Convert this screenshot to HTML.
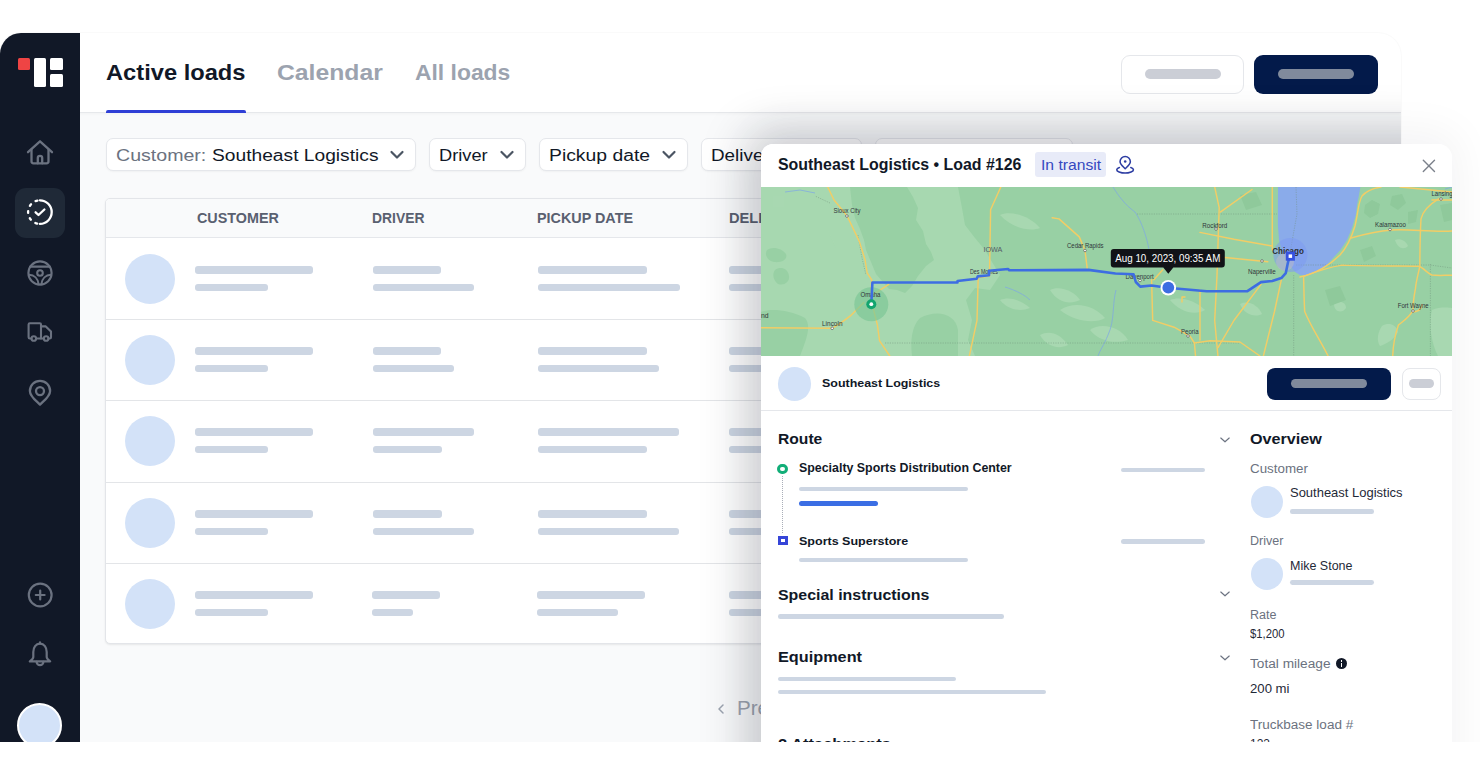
<!DOCTYPE html>
<html><head><meta charset="utf-8">
<style>
html,body{margin:0;padding:0}
body{width:1480px;height:775px;background:#fff;position:relative;overflow:hidden;font-family:"Liberation Sans",sans-serif}
.t{position:absolute;white-space:nowrap;line-height:1}
.b{position:absolute}
.ic{position:absolute;display:block}
.box{position:absolute;background:#fff;border:1px solid #e5e7eb;border-radius:7px;box-sizing:border-box;box-shadow:0 1px 2px rgba(0,0,0,0.04)}
</style></head>
<body>
<div id="app" style="position:absolute;left:0;top:32.5px;width:1401px;height:709.5px;border-radius:21px 23px 0 0;overflow:hidden;background:#f9fafb;box-shadow:0 0 0 1px rgba(0,0,0,0.018)">
 <div style="position:absolute;left:0;top:0;width:1401px;height:80.5px;background:#fff;border-bottom:1.2px solid #e6e8eb;box-sizing:border-box;box-shadow:0 1px 3px rgba(0,0,0,0.035)"></div>
</div>
<div id="shclip" style="position:absolute;left:0;top:32.5px;width:1401px;height:709.5px;overflow:hidden;z-index:5;pointer-events:none">
 <div style="position:absolute;left:760.7px;top:111px;width:691.5px;height:700px;border-radius:12px 14px 0 0;box-shadow:-5px -3px 46px 12px rgba(17,24,39,0.18)"></div>
</div>
<div style="position:absolute;left:0;top:32.5px;width:80px;height:709.5px;background:#111827;border-top-left-radius:21px"></div>
<div class="b" style="left:17.5px;top:57.5px;width:12.5px;height:12.5px;border-radius:1.5px;background:#ef4444"></div>
<div class="b" style="left:33.8px;top:57.5px;width:12.4px;height:29.4px;border-radius:1.5px;background:#fff"></div>
<div class="b" style="left:50.3px;top:57.5px;width:12.7px;height:12.6px;border-radius:1.5px;background:#fff"></div>
<div class="b" style="left:50.3px;top:74.3px;width:12.7px;height:12.6px;border-radius:1.5px;background:#fff"></div>

<svg class="ic" style="left:26px;top:139px" width="28" height="27" viewBox="0 0 28 27" fill="none" stroke="#6b7280" stroke-width="2.3" stroke-linecap="round" stroke-linejoin="round">
 <path d="M2 13.2 L14 2.3 L26 13.2"/><path d="M5.5 10.6 V22.3 Q5.5 24.3 7.5 24.3 H20.5 Q22.5 24.3 22.5 22.3 V10.6"/><path d="M11.8 24.3 V19 Q11.8 16.9 14 16.9 Q16.2 16.9 16.2 19 V24.3"/>
</svg>
<div class="b" style="left:15px;top:187.5px;width:50px;height:50px;border-radius:11px;background:#1f2937"></div>
<svg class="ic" style="left:25px;top:197px" width="30" height="30" viewBox="0 0 30 30" fill="none" stroke="#fff" stroke-width="2.3" stroke-linecap="round" stroke-linejoin="round">
 <path d="M14.9 3.3 A11.8 11.8 0 0 1 14.9 26.9"/>
 <path d="M14.9 26.9 A11.8 11.8 0 0 1 14.9 3.3" stroke-dasharray="1.9 5.514" stroke-dashoffset="4.657"/>
 <path d="M10.6 15.3 L13.5 18 L19.4 12.5"/>
</svg>
<svg class="ic" style="left:25px;top:257.5px" width="30" height="30" viewBox="0 0 30 30" fill="none" stroke="#6b7280" stroke-width="2.1" stroke-linecap="round" stroke-linejoin="round">
 <circle cx="15" cy="15" r="11.6"/><circle cx="15" cy="15" r="2.8"/>
 <path d="M5.2 8.6 H24.8"/>
 <path d="M4.2 16.8 C9 17 13 20.5 13.6 26.3"/><path d="M25.8 16.8 C21 17 17 20.5 16.4 26.3"/>
</svg>
<svg class="ic" style="left:25px;top:317px" width="30" height="30" viewBox="0 0 30 30" fill="none" stroke="#6b7280" stroke-width="2.1" stroke-linecap="round" stroke-linejoin="round">
 <path d="M6.4 21.5 H4.8 Q3.6 21.5 3.6 20.3 V7.4 Q3.6 6.2 4.8 6.2 H14.8 Q16 6.2 16 7.4 V21.5"/>
 <path d="M16 9.4 H20.8 L26 14.6 V20.3 Q26 21.5 24.8 21.5 H23.5"/><path d="M11.2 21.5 H18.5"/>
 <circle cx="8.8" cy="21.5" r="2.3"/><circle cx="21.1" cy="21.5" r="2.3"/>
</svg>
<svg class="ic" style="left:25px;top:378px" width="30" height="30" viewBox="0 0 30 30" fill="none" stroke="#6b7280" stroke-width="2.3" stroke-linecap="round" stroke-linejoin="round">
 <path d="M15 26.6 C11.5 23 4.9 18.5 4.9 12.9 A10.1 10.1 0 0 1 25.1 12.9 C25.1 18.5 18.5 23 15 26.6 Z"/>
 <circle cx="15" cy="13.1" r="4"/>
</svg>
<svg class="ic" style="left:25px;top:580px" width="30" height="30" viewBox="0 0 30 30" fill="none" stroke="#6b7280" stroke-width="2.2" stroke-linecap="round" stroke-linejoin="round">
 <circle cx="15.2" cy="15" r="11.4"/><path d="M15.2 10.6 V19.4 M10.8 15 H19.6"/>
</svg>
<svg class="ic" style="left:25px;top:640px" width="30" height="30" viewBox="0 0 30 30" fill="none" stroke="#6b7280" stroke-width="2.2" stroke-linecap="round" stroke-linejoin="round">
 <path d="M15 3.6 C10.8 3.6 8.3 7.5 8.3 12 V17 C8.3 18.8 6.8 20 4.8 21.3 H25.2 C23.2 20 21.7 18.8 21.7 17 V12 C21.7 7.5 19.2 3.6 15 3.6 Z"/>
 <path d="M11.6 21.8 A3.4 3.4 0 0 0 18.4 21.8"/><path d="M15 2.4 V3.6"/>
</svg>

<div class="b" style="left:17px;top:702.5px;width:45px;height:45px;border-radius:50%;background:#d3e2f8;box-sizing:border-box;border:2.5px solid #fff"></div>
<div class="b" style="left:0;top:742px;width:1480px;height:33px;background:#fff"></div>

<div id="t_active" class="t" style="left:105.70px;top:62.18px;font-size:21.85px;font-weight:700;color:#111827;letter-spacing:0.000px;transform:scaleX(1.0840);transform-origin:0 0">Active loads</div><div id="t_cal" class="t" style="left:276.80px;top:61.70px;font-size:21.85px;font-weight:700;color:#9ca3af;letter-spacing:0.000px;transform:scaleX(1.1317);transform-origin:0 0">Calendar</div><div id="t_all" class="t" style="left:415.00px;top:62.18px;font-size:21.85px;font-weight:700;color:#9ca3af;letter-spacing:0.000px;transform:scaleX(1.0467);transform-origin:0 0">All loads</div>
<div class="b" style="left:105.5px;top:109.7px;width:140.7px;height:3px;border-radius:2px 2px 0 0;background:#2f3fd6"></div>

<div class="b" style="left:1121px;top:55px;width:123px;height:38.5px;border-radius:9px;background:#fff;border:1px solid #e5e7eb;box-sizing:border-box"></div>
<div class="b" style="left:1145.0px;top:69.3px;width:75.5px;height:9.9px;border-radius:5.0px;background:#cbced6"></div>
<div class="b" style="left:1254px;top:55px;width:123.6px;height:38.5px;border-radius:9px;background:#031a4a"></div>
<div class="b" style="left:1278.0px;top:69.3px;width:76.0px;height:9.9px;border-radius:5.0px;background:#808a9c"></div>

<div class="box" style="left:105.6px;top:137.8px;width:310.6px;height:33.6px"></div>
<div class="box" style="left:428.5px;top:137.8px;width:97.3px;height:33.6px"></div>
<div class="box" style="left:538.6px;top:137.8px;width:149.9px;height:33.6px"></div>
<div class="box" style="left:701.2px;top:137.8px;width:161px;height:33.6px"></div>
<div class="box" style="left:875px;top:137.8px;width:198px;height:33.6px"></div>
<div id="t_f1a" class="t" style="left:115.60px;top:147.06px;font-size:17.08px;font-weight:400;color:#6b7280;letter-spacing:0.000px;transform:scaleX(1.1462);transform-origin:0 0">Customer:</div><div id="t_f1b" class="t" style="left:211.50px;top:147.06px;font-size:17.08px;font-weight:400;color:#111827;letter-spacing:0.000px;transform:scaleX(1.1242);transform-origin:0 0">Southeast Logistics</div><div id="t_f2" class="t" style="left:438.90px;top:146.74px;font-size:17.08px;font-weight:400;color:#111827;letter-spacing:0.000px;transform:scaleX(1.0670);transform-origin:0 0">Driver</div><div id="t_f3" class="t" style="left:549.20px;top:146.74px;font-size:17.08px;font-weight:400;color:#111827;letter-spacing:0.000px;transform:scaleX(1.1317);transform-origin:0 0">Pickup date</div><div id="t_f4" class="t" style="left:711.30px;top:146.74px;font-size:17.08px;font-weight:400;color:#111827;letter-spacing:0.000px;transform:scaleX(1.1036);transform-origin:0 0">Delivery date</div>
<svg class="ic" style="left:388.5px;top:150px" width="16" height="10" viewBox="0 0 16 10" fill="none" stroke="#4b5563" stroke-width="2.2" stroke-linecap="round" stroke-linejoin="round"><path d="M2.5 2 L8 7.5 L13.5 2"/></svg><svg class="ic" style="left:499px;top:150px" width="16" height="10" viewBox="0 0 16 10" fill="none" stroke="#4b5563" stroke-width="2.2" stroke-linecap="round" stroke-linejoin="round"><path d="M2.5 2 L8 7.5 L13.5 2"/></svg><svg class="ic" style="left:661px;top:150px" width="16" height="10" viewBox="0 0 16 10" fill="none" stroke="#4b5563" stroke-width="2.2" stroke-linecap="round" stroke-linejoin="round"><path d="M2.5 2 L8 7.5 L13.5 2"/></svg>

<div class="b" style="left:105px;top:197.5px;width:1300px;height:446px;border-radius:5px;background:#fff;border:1px solid #e3e5e9;box-sizing:border-box;box-shadow:0 1px 2px rgba(0,0,0,0.08)"></div>
<div class="b" style="left:106px;top:198.5px;width:1300px;height:39.5px;border-radius:4px 0 0 0;background:#f9fafb;border-bottom:1.3px solid #e5e7eb;box-sizing:border-box"></div>
<div id="t_h1" class="t" style="left:197.00px;top:209.78px;font-size:15.23px;font-weight:700;color:#596070;letter-spacing:0.000px;transform:scaleX(0.9423);transform-origin:0 0">CUSTOMER</div><div id="t_h2" class="t" style="left:371.60px;top:209.78px;font-size:15.23px;font-weight:700;color:#596070;letter-spacing:0.000px;transform:scaleX(0.9111);transform-origin:0 0">DRIVER</div><div id="t_h3" class="t" style="left:536.60px;top:209.78px;font-size:15.23px;font-weight:700;color:#596070;letter-spacing:0.000px;transform:scaleX(0.9433);transform-origin:0 0">PICKUP DATE</div><div id="t_h4" class="t" style="left:728.70px;top:209.78px;font-size:15.23px;font-weight:700;color:#596070;letter-spacing:0.000px;transform:scaleX(0.9600);transform-origin:0 0">DELIVERY DATE</div>
<div class="b" style="left:125.0px;top:253.5px;width:50.0px;height:50.0px;border-radius:50%;background:#d3e2f8;"></div>
<div class="b" style="left:195.0px;top:266.2px;width:118.0px;height:7.5px;border-radius:3.0px;background:#cdd6e3"></div>
<div class="b" style="left:195.0px;top:283.5px;width:72.8px;height:7.5px;border-radius:3.0px;background:#cdd6e3"></div>
<div class="b" style="left:372.8px;top:266.2px;width:68.6px;height:7.5px;border-radius:3.0px;background:#cdd6e3"></div>
<div class="b" style="left:372.8px;top:283.5px;width:101.2px;height:7.5px;border-radius:3.0px;background:#cdd6e3"></div>
<div class="b" style="left:538.0px;top:266.2px;width:109.0px;height:7.5px;border-radius:3.0px;background:#cdd6e3"></div>
<div class="b" style="left:538.0px;top:283.5px;width:141.5px;height:7.5px;border-radius:3.0px;background:#cdd6e3"></div>
<div class="b" style="left:728.5px;top:266.2px;width:71.5px;height:7.5px;border-radius:3.0px;background:#cdd6e3"></div>
<div class="b" style="left:728.5px;top:283.5px;width:71.5px;height:7.5px;border-radius:3.0px;background:#cdd6e3"></div>
<div class="b" style="left:125.0px;top:334.5px;width:50.0px;height:50.0px;border-radius:50%;background:#d3e2f8;"></div>
<div class="b" style="left:195.0px;top:347.2px;width:118.0px;height:7.5px;border-radius:3.0px;background:#cdd6e3"></div>
<div class="b" style="left:195.0px;top:364.5px;width:72.8px;height:7.5px;border-radius:3.0px;background:#cdd6e3"></div>
<div class="b" style="left:372.8px;top:347.2px;width:68.6px;height:7.5px;border-radius:3.0px;background:#cdd6e3"></div>
<div class="b" style="left:372.8px;top:364.5px;width:81.2px;height:7.5px;border-radius:3.0px;background:#cdd6e3"></div>
<div class="b" style="left:538.0px;top:347.2px;width:109.0px;height:7.5px;border-radius:3.0px;background:#cdd6e3"></div>
<div class="b" style="left:538.0px;top:364.5px;width:121.3px;height:7.5px;border-radius:3.0px;background:#cdd6e3"></div>
<div class="b" style="left:728.5px;top:347.2px;width:71.5px;height:7.5px;border-radius:3.0px;background:#cdd6e3"></div>
<div class="b" style="left:728.5px;top:364.5px;width:71.5px;height:7.5px;border-radius:3.0px;background:#cdd6e3"></div>
<div class="b" style="left:106px;top:319px;width:700px;height:1px;background:#e3e5e8"></div>
<div class="b" style="left:125.0px;top:415.5px;width:50.0px;height:50.0px;border-radius:50%;background:#d3e2f8;"></div>
<div class="b" style="left:195.0px;top:428.2px;width:118.0px;height:7.5px;border-radius:3.0px;background:#cdd6e3"></div>
<div class="b" style="left:195.0px;top:445.5px;width:72.8px;height:7.5px;border-radius:3.0px;background:#cdd6e3"></div>
<div class="b" style="left:372.8px;top:428.2px;width:101.2px;height:7.5px;border-radius:3.0px;background:#cdd6e3"></div>
<div class="b" style="left:372.8px;top:445.5px;width:68.9px;height:7.5px;border-radius:3.0px;background:#cdd6e3"></div>
<div class="b" style="left:538.0px;top:428.2px;width:141.4px;height:7.5px;border-radius:3.0px;background:#cdd6e3"></div>
<div class="b" style="left:538.0px;top:445.5px;width:109.0px;height:7.5px;border-radius:3.0px;background:#cdd6e3"></div>
<div class="b" style="left:728.5px;top:428.2px;width:71.5px;height:7.5px;border-radius:3.0px;background:#cdd6e3"></div>
<div class="b" style="left:728.5px;top:445.5px;width:71.5px;height:7.5px;border-radius:3.0px;background:#cdd6e3"></div>
<div class="b" style="left:106px;top:400px;width:700px;height:1px;background:#e3e5e8"></div>
<div class="b" style="left:125.0px;top:497.5px;width:50.0px;height:50.0px;border-radius:50%;background:#d3e2f8;"></div>
<div class="b" style="left:195.0px;top:510.2px;width:118.0px;height:7.5px;border-radius:3.0px;background:#cdd6e3"></div>
<div class="b" style="left:195.0px;top:527.5px;width:72.8px;height:7.5px;border-radius:3.0px;background:#cdd6e3"></div>
<div class="b" style="left:372.8px;top:510.2px;width:68.9px;height:7.5px;border-radius:3.0px;background:#cdd6e3"></div>
<div class="b" style="left:372.8px;top:527.5px;width:101.2px;height:7.5px;border-radius:3.0px;background:#cdd6e3"></div>
<div class="b" style="left:538.0px;top:510.2px;width:109.0px;height:7.5px;border-radius:3.0px;background:#cdd6e3"></div>
<div class="b" style="left:538.0px;top:527.5px;width:141.4px;height:7.5px;border-radius:3.0px;background:#cdd6e3"></div>
<div class="b" style="left:728.5px;top:510.2px;width:71.5px;height:7.5px;border-radius:3.0px;background:#cdd6e3"></div>
<div class="b" style="left:728.5px;top:527.5px;width:71.5px;height:7.5px;border-radius:3.0px;background:#cdd6e3"></div>
<div class="b" style="left:106px;top:482px;width:700px;height:1px;background:#e3e5e8"></div>
<div class="b" style="left:125.0px;top:578.5px;width:50.0px;height:50.0px;border-radius:50%;background:#d3e2f8;"></div>
<div class="b" style="left:195.0px;top:591.2px;width:118.0px;height:7.5px;border-radius:3.0px;background:#cdd6e3"></div>
<div class="b" style="left:195.0px;top:608.5px;width:72.8px;height:7.5px;border-radius:3.0px;background:#cdd6e3"></div>
<div class="b" style="left:371.5px;top:591.2px;width:68.8px;height:7.5px;border-radius:3.0px;background:#cdd6e3"></div>
<div class="b" style="left:371.5px;top:608.5px;width:41.3px;height:7.5px;border-radius:3.0px;background:#cdd6e3"></div>
<div class="b" style="left:536.8px;top:591.2px;width:108.5px;height:7.5px;border-radius:3.0px;background:#cdd6e3"></div>
<div class="b" style="left:536.8px;top:608.5px;width:81.2px;height:7.5px;border-radius:3.0px;background:#cdd6e3"></div>
<div class="b" style="left:728.5px;top:591.2px;width:71.5px;height:7.5px;border-radius:3.0px;background:#cdd6e3"></div>
<div class="b" style="left:728.5px;top:608.5px;width:71.5px;height:7.5px;border-radius:3.0px;background:#cdd6e3"></div>
<div class="b" style="left:106px;top:563px;width:700px;height:1px;background:#e3e5e8"></div>

<svg class="ic" style="left:716px;top:703px" width="10" height="12" viewBox="0 0 10 12" fill="none" stroke="#9ca3af" stroke-width="1.5" stroke-linecap="round" stroke-linejoin="round"><path d="M7 2 L3 6 L7 10"/></svg>
<div id="t_prev" class="t" style="left:736.80px;top:698.87px;font-size:19.64px;font-weight:400;color:#9ca3af;letter-spacing:0.000px;transform:scaleX(1.0477);transform-origin:0 0">Previous</div>

<!-- drawer -->
<div style="position:absolute;left:0;top:0;width:1480px;height:742px;overflow:hidden;z-index:5;pointer-events:none">
 <div style="position:absolute;left:760.7px;top:143.5px;width:691.5px;height:700px;border-radius:12px 14px 0 0;box-shadow:0 -6px 44px 6px rgba(17,24,39,0.05)"></div>
</div>
<div id="drawer" style="position:absolute;left:760.7px;top:143.5px;width:691.5px;height:598.5px;background:#fff;border-radius:12px 14px 0 0;overflow:hidden;z-index:6">
 <div style="position:absolute;left:0;top:43.5px;width:691.5px;height:169px;overflow:hidden">
<svg width="691" height="169" viewBox="761 187 691 169" style="position:absolute;left:0;top:0;display:block">
<rect x="761" y="187" width="691" height="169" fill="#a7d8b0"/>
<g fill="#98d0a4">
 <!-- NW Iowa big dark -->
 <path d="M850 187 L907 187 L913 197 L918 208 L916 220 L923 231 L926 244 L931 252 L934 260 L926 266 L918 276 L912 286 L905 293 L897 290 L889 289 L882 281 L876 274 L871 262 L866 250 L864 240 L860 229 L855 218 L852 205 Z"/>
 <!-- east Iowa / Illinois darker zone -->
 <path d="M958 187 L1232 187 L1232 356 L975 356 L968 340 L972 320 L966 300 L975 288 L990 290 L1000 275 L992 262 L985 250 L975 238 L965 225 L962 208 Z"/>
 <!-- right side -->
 <path d="M1232 187 L1452 187 L1452 356 L1232 356 Z"/>
 <!-- nebraska small -->
 <path d="M767 250 C772 246 782 248 786 254 C788 259 782 263 774 262 C768 261 764 255 767 250 Z"/>
 <path d="M775 270 C780 266 788 268 789 276 C790 282 784 286 778 284 C773 280 772 274 775 270 Z"/>
 <path d="M761 312 C770 308 790 310 805 318 C812 326 806 340 800 356 L761 356 Z"/>
 <path d="M920 318 C935 310 955 312 958 330 L958 356 L912 356 C910 340 912 326 920 318 Z"/>
</g>
<g fill="#a8d8b1">
 <path d="M1050 290 C1060 285 1075 292 1080 300 C1070 305 1058 303 1050 290 Z"/>
 <path d="M1060 310 C1075 300 1095 306 1105 318 C1095 324 1075 322 1060 310 Z"/>
 <path d="M1000 300 C1010 296 1020 300 1030 308 C1020 312 1008 310 1000 300 Z"/>
 <path d="M1090 330 C1100 322 1120 326 1128 340 C1115 344 1100 342 1090 330 Z"/>
 <path d="M1040 335 C1050 330 1060 334 1068 345 C1058 350 1046 346 1040 335 Z"/>
 <path d="M1000 215 C1010 210 1030 216 1040 228 C1030 232 1012 228 1000 215 Z"/>
 <path d="M1170 300 C1180 296 1195 300 1205 310 C1195 316 1180 312 1170 300 Z"/>
 <path d="M1395 240 C1400 238 1406 241 1408 246 C1404 250 1398 249 1395 240 Z"/>
 <path d="M1432 310 C1440 306 1452 308 1452 308 L1452 356 L1438 356 C1432 345 1428 325 1432 310 Z"/>
 <path d="M1382 326 C1388 322 1396 324 1398 332 C1394 340 1386 344 1380 346 C1376 340 1378 332 1382 326 Z"/>
 <path d="M1334 304 C1340 300 1346 302 1346 308 C1342 314 1334 312 1334 304 Z"/>
 <path d="M1338 215 C1345 211 1352 215 1350 222 C1344 226 1336 222 1338 215 Z"/>
 <path d="M1240 304 C1248 300 1258 305 1262 314 C1254 318 1244 314 1240 304 Z"/>
 <path d="M773 196 L784 196 L784 207 L773 207 Z"/>
 <path d="M828 231 L855 231 L855 248 L836 248 Z" opacity="0.8"/>
</g>
<g fill="#8fc99b">
 <path d="M1365 205 L1372 200 L1380 204 L1378 214 L1370 218 L1364 213 Z"/>
 <path d="M1392 196 L1402 194 L1406 203 L1398 210 L1390 205 Z"/>
 <path d="M1408 212 L1418 210 L1416 222 L1408 224 Z"/>
 <path d="M1440 205 L1452 203 L1452 220 L1444 222 Z"/>
 <path d="M1360 250 L1372 246 L1376 256 L1364 262 Z"/>
 <path d="M1325 290 L1340 286 L1346 300 L1330 306 Z"/>
 <path d="M1240 195 L1256 192 L1262 205 L1246 210 Z"/>
</g>
<!-- lake -->
<path d="M1278 187 L1360.4 187 L1359 195 L1357 205 L1355.9 214.4 L1352 228 L1347 240 L1340 250.5 L1333 258 L1326 266 L1317.5 272 L1308 275.5 L1300 275 L1295 272 L1289.2 264 L1283 253 L1279 240 L1277.9 225 L1277.9 207.6 Z" fill="#8aabea"/>
<!-- rivers -->
<g fill="none" stroke="#7fa7e6" stroke-width="0.8" opacity="0.9">
 <path d="M1113 187 C1118 195 1125 205 1135 212 C1142 222 1148 240 1150 256"/>
 <path d="M1116 290 C1112 305 1115 320 1108 335 C1104 345 1100 350 1098 356"/>
 <path d="M785 192 L800 190 L815 193"/>
 <path d="M1005 287 C1015 290 1025 295 1030 300"/>
 <path d="M1445 189 L1452 187"/>
</g>
<!-- dotted borders -->
<g fill="none" stroke="#6e8f7b" stroke-width="0.6" stroke-dasharray="1.2 1.2" opacity="0.75">
 <path d="M1137 214 L1277 214"/>
 <path d="M1296 187 L1297 214 L1288 264"/>
 <path d="M1296 265 L1430 265 L1452 268"/>
 <path d="M1293.7 275 L1293.7 356"/>
 <path d="M1430.4 264 L1430.4 356"/>
 <path d="M885 343 L1240 343"/>
 <path d="M858 235 L862 258 L866 275"/>
 <path d="M830 203 L815 196"/>
</g>
<!-- roads -->
<g fill="none" stroke="#f2cd66" stroke-width="1.45" stroke-linecap="round" stroke-linejoin="round">
 <path d="M827.7 187 L834 200 L846.9 215.5 L859.3 241.4 L865 259.5 L867.2 273 L871.7 279.8 L870.6 297.9 L877.4 325 L879.6 340.8 L889.8 356"/>
 <path d="M871.7 295.6 L888.7 284.3"/>
 <path d="M863.8 302.4 L850.3 315.9 L841.3 322.7 L832.2 328.3 L761 327.7"/>
 <path d="M1000.8 187 L990.6 209.8 L989.5 276"/>
 <path d="M989.5 276 L978.2 277.5 L977 320.4 L969.2 356.6"/>
 <path d="M1052.2 217.7 L1059 218.9 L1079.3 236.9 L1085 250.5 L1087.2 268.5"/>
 <path d="M1151.6 279.8 L1152.7 320.4 L1174.1 327.2 L1190 336.2 L1194.4 343 L1195.6 356.6"/>
 <path d="M1194.4 343 L1210 340.8 L1240 342 L1260 356"/>
 <path d="M1153.8 279.8 L1162.8 269.7"/>
 <path d="M1214.7 187 L1219.2 207.6 L1217 275.4 L1214.7 320.5 L1218 356.7"/>
 <path d="M1272.3 187 L1272.3 250"/>
 <path d="M1281.3 279.9 L1274.5 311.5 L1263.2 356.7"/>
 <path d="M1300 277 C1315 274 1330 265 1340 255 C1348 246 1352 236 1355 226 C1358 214 1358 203 1362 196 C1367 190 1375 188 1381 187"/>
 <path d="M1351 238 C1365 234 1380 231 1392 230 C1410 229 1430 232 1452 231"/>
 <path d="M1303.6 276.4 C1315 272 1330 267 1342 265.1 C1370 266 1400 266 1418.8 266.3 C1424 268 1428 274 1432 275 C1440 276 1446 275 1452 275.3"/>
 <path d="M1439 198.6 C1430 204 1423 210 1421 218.9 C1420 235 1420 250 1419.8 266.3 C1418 275 1416 282 1415.4 288.9 C1414 296 1413 304 1413 310.4 C1409 318 1402 322 1398.4 325 C1395 335 1393 345 1392.7 356.6"/>
 <path d="M1303.6 277.6 C1304 290 1304 300 1304.7 311.5 C1310 325 1320 340 1328.4 356.6"/>
 <path d="M1412 312 C1418 312 1421 310 1422 305"/>
 <path d="M1200 232.4 L1233.9 239.2 L1272.3 246"/>
 <path d="M1220.3 212.1 L1252 189.5"/>
 <path d="M1200 255 L1267.8 261.8"/>
 <path d="M1261 284.4 L1233.9 320.5 L1218 347.6"/>
 <path d="M1400 187 L1452 192"/>
 <path d="M1432 200 L1452 200"/>
 <path d="M1200 290 L1200 340"/>
 <path d="M1182 302 L1182 297 L1185 297"/>
</g>
<!-- halos -->
<circle cx="871.3" cy="304.2" r="17" fill="#7ec797" opacity="0.7"/>
<circle cx="1290.4" cy="255" r="17" fill="#7d9af0" opacity="0.55"/>
<circle cx="1285" cy="262" r="9" fill="#b9b9c8" opacity="0.55"/>
<!-- labels -->
<g font-family="Liberation Sans, sans-serif" font-size="6.8" fill="#30353a">
 <text x="833.5" y="213.3" textLength="27" lengthAdjust="spacingAndGlyphs">Sioux City</text>
 <text x="860.5" y="297" textLength="20" lengthAdjust="spacingAndGlyphs">Omaha</text>
 <text x="822" y="326.2" textLength="20.5" lengthAdjust="spacingAndGlyphs">Lincoln</text>
 <text x="983.4" y="252.3" font-size="7.5" fill="#555c66" textLength="19" lengthAdjust="spacingAndGlyphs">IOWA</text>
 <text x="970" y="274.2" textLength="28" lengthAdjust="spacingAndGlyphs">Des Moines</text>
 <text x="1067" y="248.3" textLength="36.5" lengthAdjust="spacingAndGlyphs">Cedar Rapids</text>
 <text x="1125.6" y="278.8" textLength="28" lengthAdjust="spacingAndGlyphs">Davenport</text>
 <text x="1181" y="334.1" textLength="17.5" lengthAdjust="spacingAndGlyphs">Peoria</text>
 <text x="1202.3" y="228" textLength="25" lengthAdjust="spacingAndGlyphs">Rockford</text>
 <text x="1272.3" y="254" font-size="9" font-weight="700" fill="#2a2e33" textLength="31.5" lengthAdjust="spacingAndGlyphs">Chicago</text>
 <text x="1247.9" y="273.6" textLength="27.8" lengthAdjust="spacingAndGlyphs">Naperville</text>
 <text x="1375" y="226.9" textLength="31" lengthAdjust="spacingAndGlyphs">Kalamazoo</text>
 <text x="1431.5" y="196.4" textLength="21" lengthAdjust="spacingAndGlyphs">Lansing</text>
 <text x="1397.7" y="308.2" textLength="31" lengthAdjust="spacingAndGlyphs">Fort Wayne</text>
 <text x="761" y="318.3">nd</text>
</g>
<g fill="#fff" stroke="#555" stroke-width="0.7">
 <circle cx="846.9" cy="216" r="1.3"/><circle cx="832.2" cy="328.3" r="1.3"/><circle cx="1085" cy="250.5" r="1.3"/>
 <circle cx="1140" cy="280.5" r="1.3"/><circle cx="1188" cy="336" r="1.3"/><circle cx="1216" cy="229" r="1.3"/>
 <circle cx="1262" cy="261" r="1.3"/><circle cx="1390" cy="229.5" r="1.3"/><circle cx="1441" cy="199" r="1.3"/><circle cx="1413" cy="311" r="1.3"/>
</g>
<!-- route -->
<path d="M871.3 304 L872.4 282.5 L957.5 282.5 L957.5 281 L976.7 278.7 L977.8 276.4 L989 275.3 L989 270.8 L1008.2 269 L1009.3 270.3 L1088.4 269.9 L1115.4 273.5 L1133.5 274.2 L1135.8 282 L1140.3 286.6 L1151.6 285.5 L1167.4 287.7 L1206.8 291.2 L1247.4 291.2 L1261 282.1 L1272.3 281 L1281.3 278.1 L1285.8 273.1 L1288.1 261.8 L1290 256" fill="none" stroke="#3d6de2" stroke-width="2.6" stroke-linejoin="round" stroke-linecap="round"/>
<!-- origin marker -->
<circle cx="871.3" cy="304.2" r="5" fill="#12a56f"/>
<circle cx="871.3" cy="304.2" r="1.9" fill="#fff"/>
<!-- dest marker -->
<rect x="1285.8" y="251.6" width="9.1" height="9.1" fill="#3552e0"/>
<rect x="1288.6" y="254.4" width="3.5" height="3.5" fill="#fff"/>
<!-- current pos -->
<circle cx="1168.3" cy="287.7" r="7.8" fill="#fff"/>
<circle cx="1168.3" cy="287.7" r="5.9" fill="#3d6de2"/>
<!-- tooltip -->
<path d="M1113.8 248.9 H1221.8 Q1224.8 248.9 1224.8 251.9 V264.4 Q1224.8 267.4 1221.8 267.4 H1173.3 L1168.3 273.8 L1163.3 267.4 H1113.8 Q1110.8 267.4 1110.8 264.4 V251.9 Q1110.8 248.9 1113.8 248.9 Z" fill="#111317"/>
<text x="1115.3" y="261.8" font-family="Liberation Sans, sans-serif" font-size="11" fill="#fff" textLength="105" lengthAdjust="spacingAndGlyphs">Aug 10, 2023, 09:35 AM</text>
</svg>
</div>
 <div class="b" style="left:0;top:266.2px;width:691.5px;height:1.2px;background:#e5e7eb"></div>
</div>
<div id="dcontent" style="position:absolute;left:0;top:0;width:1480px;height:742px;overflow:hidden;pointer-events:none;z-index:7">
<div id="d_title" class="t" style="left:778.00px;top:155.88px;font-size:16.39px;font-weight:700;color:#111827;letter-spacing:0.000px;transform:scaleX(0.9716);transform-origin:0 0">Southeast Logistics &bull; Load #126</div>
<div class="b" style="left:1035px;top:152.3px;width:71px;height:24.6px;border-radius:3px;background:#e8ebf8"></div>
<div id="d_badge" class="t" style="left:1040.60px;top:157.70px;font-size:14.86px;font-weight:400;color:#3548c0;letter-spacing:0.000px;transform:scaleX(1.0544);transform-origin:0 0">In transit</div>
<svg class="ic" style="left:1114px;top:154px" width="22" height="22" viewBox="0 0 22 22" fill="none" stroke="#2d3da3" stroke-width="1.55" stroke-linecap="round" stroke-linejoin="round">
 <path d="M11.2 14.7 C9 12.5 6.05 10.3 6.05 7.7 A5.15 5.15 0 0 1 16.35 7.7 C16.35 10.3 13.4 12.5 11.2 14.7 Z"/>
 <circle cx="11.2" cy="7.5" r="1.3" fill="#2d3da3" stroke="none"/>
 <path d="M5.4 13.6 A8.35 3.05 0 1 0 16.8 13.6"/>
</svg>
<svg class="ic" style="left:1421px;top:158px" width="16" height="16" viewBox="0 0 16 16" fill="none" stroke="#7b818b" stroke-width="1.4" stroke-linecap="round"><path d="M2.3 2.3 L13.5 13.5 M13.5 2.3 L2.3 13.5"/></svg>

<div class="b" style="left:777.6px;top:367.2px;width:33.6px;height:33.6px;border-radius:50%;background:#d3e2f8;"></div>
<div id="d_comp" class="t" style="left:822.40px;top:377.59px;font-size:11.32px;font-weight:700;color:#111827;letter-spacing:0.000px;transform:scaleX(1.0995);transform-origin:0 0">Southeast Logistics</div>
<div class="b" style="left:1267.2px;top:367.6px;width:123.4px;height:32px;border-radius:8px;background:#031a4a"></div>
<div class="b" style="left:1291.4px;top:379.3px;width:75.3px;height:8.9px;border-radius:4.4px;background:#808a9c"></div>
<div class="b" style="left:1402px;top:367.6px;width:39.3px;height:32px;border-radius:8px;background:#fff;border:1px solid #e5e7eb;box-sizing:border-box"></div>
<div class="b" style="left:1409.3px;top:379.3px;width:24.4px;height:8.9px;border-radius:4.4px;background:#cbced6"></div>

<div id="d_route" class="t" style="left:778.10px;top:432.05px;font-size:14.58px;font-weight:700;color:#111827;letter-spacing:0.000px;transform:scaleX(1.0723);transform-origin:0 0">Route</div>
<svg class="ic" style="left:1219px;top:435.5px" width="12" height="8" viewBox="0 0 12 8" fill="none" stroke="#6b7280" stroke-width="1.15" stroke-linecap="round" stroke-linejoin="round"><path d="M1.8 2 L6 5.8 L10.2 2"/></svg>
<div class="b" style="left:777.3px;top:463.9px;width:10.6px;height:10.6px;border-radius:50%;box-sizing:border-box;border:3.5px solid #12ae78;background:#fff"></div>
<div class="b" style="left:782px;top:476px;width:0;height:57px;border-left:1px dotted #a9aeb8"></div>
<div id="d_stop1" class="t" style="left:798.50px;top:462.60px;font-size:11.85px;font-weight:700;color:#111827;letter-spacing:0.000px;transform:scaleX(1.0459);transform-origin:0 0">Specialty Sports Distribution Center</div>
<div class="b" style="left:1120.8px;top:467.7px;width:84.0px;height:4.6px;border-radius:2.3px;background:#cdd6e3"></div>
<div class="b" style="left:798.5px;top:486.5px;width:169.7px;height:4.5px;border-radius:2.2px;background:#cdd6e3"></div>
<div class="b" style="left:798.5px;top:501.3px;width:79.9px;height:5.1px;border-radius:2.5px;background:#3b6ee4"></div>
<div class="b" style="left:777.7px;top:535.9px;width:9.9px;height:9.6px;box-sizing:border-box;border:3.2px solid #3645d8;background:#fff"></div>
<div id="d_stop2" class="t" style="left:798.50px;top:535.93px;font-size:11.59px;font-weight:700;color:#111827;letter-spacing:0.000px;transform:scaleX(1.0810);transform-origin:0 0">Sports Superstore</div>
<div class="b" style="left:1120.8px;top:538.8px;width:84.0px;height:4.9px;border-radius:2.5px;background:#cdd6e3"></div>
<div class="b" style="left:798.5px;top:557.6px;width:169.7px;height:4.9px;border-radius:2.4px;background:#cdd6e3"></div>
<div id="d_spec" class="t" style="left:777.90px;top:587.15px;font-size:14.99px;font-weight:700;color:#111827;letter-spacing:0.000px;transform:scaleX(1.0626);transform-origin:0 0">Special instructions</div>
<svg class="ic" style="left:1219px;top:589.5px" width="12" height="8" viewBox="0 0 12 8" fill="none" stroke="#6b7280" stroke-width="1.15" stroke-linecap="round" stroke-linejoin="round"><path d="M1.8 2 L6 5.8 L10.2 2"/></svg>
<div class="b" style="left:777.9px;top:614.0px;width:226.5px;height:4.6px;border-radius:2.3px;background:#cdd6e3"></div>
<div id="d_equip" class="t" style="left:777.90px;top:648.75px;font-size:14.99px;font-weight:700;color:#111827;letter-spacing:0.000px;transform:scaleX(1.0850);transform-origin:0 0">Equipment</div>
<svg class="ic" style="left:1219px;top:653.5px" width="12" height="8" viewBox="0 0 12 8" fill="none" stroke="#6b7280" stroke-width="1.15" stroke-linecap="round" stroke-linejoin="round"><path d="M1.8 2 L6 5.8 L10.2 2"/></svg>
<div class="b" style="left:777.9px;top:676.6px;width:177.7px;height:4.5px;border-radius:2.2px;background:#cdd6e3"></div>
<div class="b" style="left:777.9px;top:689.5px;width:267.8px;height:4.1px;border-radius:2.1px;background:#cdd6e3"></div>
<div id="d_att" class="t" style="left:777.90px;top:735.71px;font-size:14.99px;font-weight:700;color:#111827;letter-spacing:0.000px;transform:scaleX(1.0993);transform-origin:0 0">2 Attachments</div>

<div id="o_title" class="t" style="left:1250.10px;top:431.24px;font-size:15.26px;font-weight:700;color:#111827;letter-spacing:0.000px;transform:scaleX(1.0600);transform-origin:0 0">Overview</div>
<div id="o_l1" class="t" style="left:1250.00px;top:462.20px;font-size:13.11px;font-weight:400;color:#6b7280;letter-spacing:0.000px;transform:scaleX(1.0189);transform-origin:0 0">Customer</div>
<div class="b" style="left:1250.7px;top:485.8px;width:32.0px;height:32.0px;border-radius:50%;background:#d3e2f8;"></div>
<div id="o_v1" class="t" style="left:1290.00px;top:487.17px;font-size:12.81px;font-weight:400;color:#1f2937;letter-spacing:0.000px;transform:scaleX(1.0137);transform-origin:0 0">Southeast Logistics</div>
<div class="b" style="left:1290.0px;top:509.1px;width:83.5px;height:4.6px;border-radius:2.3px;background:#cdd6e3"></div>
<div id="o_l2" class="t" style="left:1250.00px;top:534.42px;font-size:13.11px;font-weight:400;color:#6b7280;letter-spacing:0.000px;transform:scaleX(0.9580);transform-origin:0 0">Driver</div>
<div class="b" style="left:1250.6px;top:557.5px;width:32.0px;height:32.0px;border-radius:50%;background:#d3e2f8;"></div>
<div id="o_v2" class="t" style="left:1289.80px;top:559.95px;font-size:12.81px;font-weight:400;color:#1f2937;letter-spacing:0.000px;transform:scaleX(0.9761);transform-origin:0 0">Mike Stone</div>
<div class="b" style="left:1290.0px;top:580.0px;width:83.5px;height:4.9px;border-radius:2.4px;background:#cdd6e3"></div>
<div id="o_l3" class="t" style="left:1250.00px;top:607.68px;font-size:13.11px;font-weight:400;color:#6b7280;letter-spacing:0.000px;transform:scaleX(0.9566);transform-origin:0 0">Rate</div><div id="o_v3" class="t" style="left:1250.00px;top:627.91px;font-size:12.81px;font-weight:400;color:#1f2937;letter-spacing:0.000px;transform:scaleX(0.8840);transform-origin:0 0">$1,200</div>
<div id="o_l4" class="t" style="left:1250.00px;top:656.94px;font-size:13.11px;font-weight:400;color:#6b7280;letter-spacing:0.000px;transform:scaleX(1.0421);transform-origin:0 0">Total mileage</div>
<div class="b" style="left:1336.2px;top:658.2px;width:11px;height:11px;border-radius:50%;background:#111827"></div>
<div class="b" style="left:1341.1px;top:662.5px;width:1.3px;height:4px;background:#fff"></div>
<div class="b" style="left:1341.1px;top:660.3px;width:1.3px;height:1.3px;background:#fff"></div>
<div id="o_v4" class="t" style="left:1250.00px;top:682.67px;font-size:12.81px;font-weight:400;color:#1f2937;letter-spacing:0.000px;transform:scaleX(1.0281);transform-origin:0 0">200 mi</div>
<div id="o_l5" class="t" style="left:1250.00px;top:717.92px;font-size:13.11px;font-weight:400;color:#6b7280;letter-spacing:0.000px;transform:scaleX(1.0312);transform-origin:0 0">Truckbase load #</div><div id="o_v5" class="t" style="left:1250.00px;top:738.05px;font-size:12.81px;font-weight:400;color:#1f2937;letter-spacing:0.000px;transform:scaleX(0.9364);transform-origin:0 0">123</div>
</div>
</body></html>
